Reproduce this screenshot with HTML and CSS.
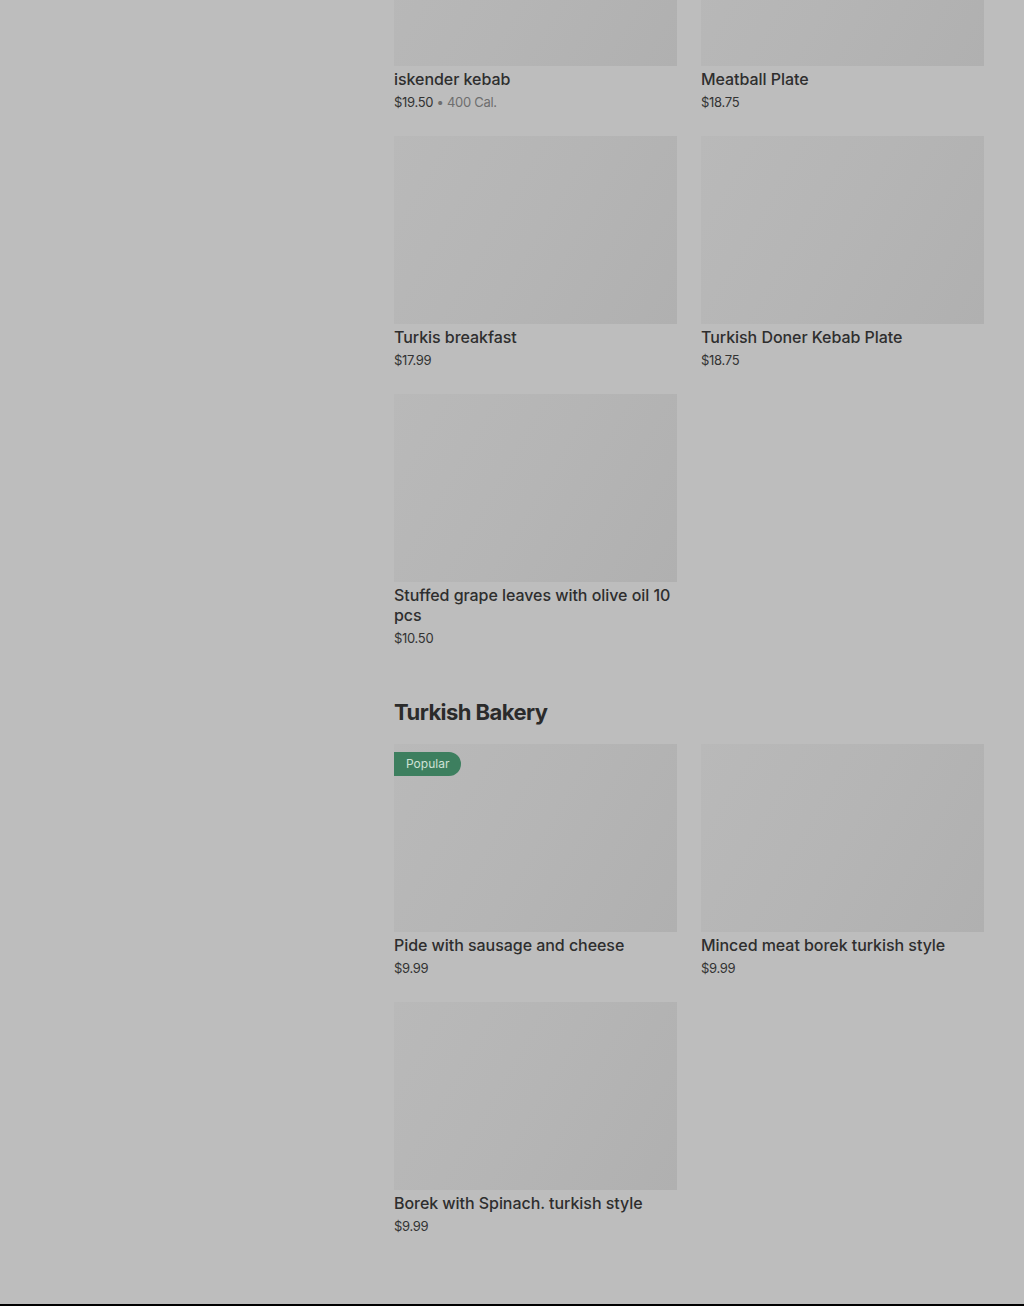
FILE: index.html
```html
<!DOCTYPE html>
<html lang="en">
<head>
<meta charset="utf-8">
<title>Menu</title>
<link rel="stylesheet" href="styles.css">
</head>
<body>
<div class="page">
  <main class="menu">
    <section class="section first">
      <div class="grid">
        <div class="card"><div class="img"></div><div class="title">iskender kebab</div><div class="price">$19.50 <span class="cal">• 400 Cal.</span></div></div>
        <div class="card"><div class="img"></div><div class="title">Meatball Plate</div><div class="price">$18.75</div></div>
        <div class="card"><div class="img"></div><div class="title">Turkis breakfast</div><div class="price">$17.99</div></div>
        <div class="card"><div class="img"></div><div class="title">Turkish Doner Kebab Plate</div><div class="price">$18.75</div></div>
        <div class="card"><div class="img"></div><div class="title">Stuffed grape leaves with olive oil 10 pcs</div><div class="price">$10.50</div></div>
      </div>
    </section>
    <section class="section">
      <h2 class="heading">Turkish Bakery</h2>
      <div class="grid">
        <div class="card"><div class="img"><span class="badge">Popular</span></div><div class="title">Pide with sausage and cheese</div><div class="price">$9.99</div></div>
        <div class="card"><div class="img"></div><div class="title">Minced meat borek turkish style</div><div class="price">$9.99</div></div>
        <div class="card"><div class="img"></div><div class="title">Borek with Spinach. turkish style</div><div class="price">$9.99</div></div>
      </div>
    </section>
  </main>
  <div class="footer-line"></div>
</div>
</body>
</html>
```
FILE: styles.css
```css
* { box-sizing: border-box; }
html, body { margin: 0; padding: 0; }
body {
  background: #bdbdbd;
  font-family: Inter, "Noto Sans", sans-serif;
  color: #2f2f2f;
  overflow: hidden;
}
.page {
  height: 1306px;
  display: flex;
  flex-direction: column;
}
.menu {
  flex: 1;
  padding-left: 394px;
  padding-right: 40px;
  margin-top: -122px;
}
.grid {
  display: grid;
  grid-template-columns: 283px 283px;
  column-gap: 24px;
  row-gap: 25px;
}
.card { display: flex; flex-direction: column; }
.img {
  position: relative;
  height: 188px;
  background: linear-gradient(120deg, #b9b9b9 0%, #b5b5b5 50%, #b0b0b0 100%);
}
.title {
  margin-top: 3px;
  font-size: 16px;
  line-height: 20px;
  font-weight: 500;
  color: #2e2e2e;
  letter-spacing: -0.05px;
}
.price {
  margin-top: 4px;
  font-size: 13px;
  line-height: 18px;
  color: #333;
  letter-spacing: -0.3px;
}
.cal { color: #6e6e6e; }
.section.first { padding-bottom: 49px; }
.heading {
  margin: 0 0 16px;
  font-size: 22px;
  line-height: 32px;
  font-weight: 700;
  letter-spacing: -0.55px;
  color: #2b2b2b;
}
.badge {
  position: absolute;
  left: 0;
  top: 8px;
  height: 24px;
  line-height: 24px;
  padding: 0 12px;
  background: #3d7f5f;
  color: #cfe2d6;
  font-size: 12px;
  border-radius: 0 12px 12px 0;
}
.footer-line {
  height: 2px;
  background: #000;
}
```
